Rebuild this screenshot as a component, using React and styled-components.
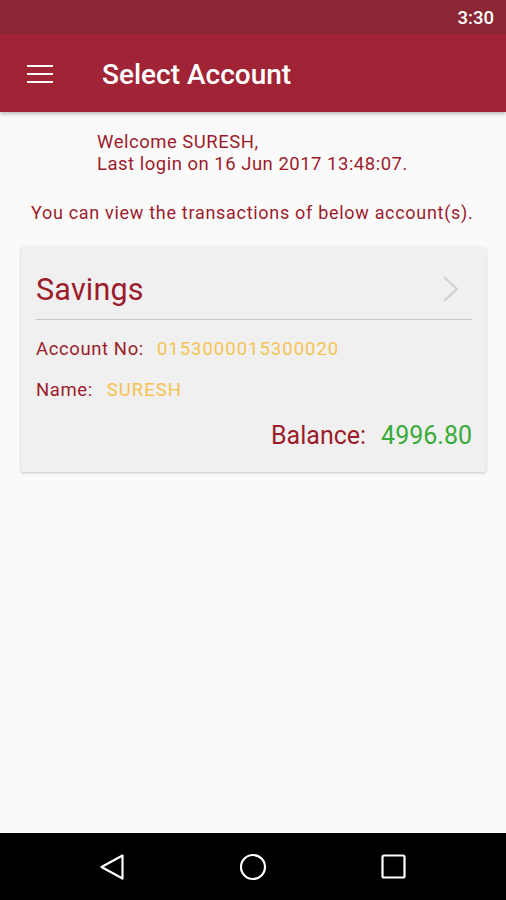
import React from 'react'
import styled, { createGlobalStyle } from "styled-components";

const GlobalStyle = createGlobalStyle`
  html, body {
    margin: 0;
    padding: 0;
    background: #fafafa;
  }
  * { box-sizing: border-box; }
`

const App = () => {
    const accounts = [
        { id: 1, type: "Savings", number: "0153000015300020", name: "SURESH", balance: "4996.80" }
    ]

    return (
        <Screen>
            <GlobalStyle />
            <StatusBar>3:30</StatusBar>
            <AppBar>
                <MenuIcon>
                    <span /><span /><span />
                </MenuIcon>
                <Title>Select Account</Title>
            </AppBar>
            <Content>
                <Welcome>
                    Welcome SURESH,<br />
                    Last login on 16 Jun 2017 13:48:07.
                </Welcome>
                <Notice>You can view the transactions of below account(s).</Notice>
                {
                    accounts.map((acc) => (
                        <Card key={acc.id}>
                            <CardHead>
                                <AccountType>{acc.type}</AccountType>
                                <svg width="18" height="28" viewBox="0 0 18 28">
                                    <path d="M2 2 L15 14 L2 26" fill="none" stroke="#cfcfcf" strokeWidth="2" />
                                </svg>
                            </CardHead>
                            <Fields>
                                <Field $gap="13px">
                                    <Label>Account No:</Label>
                                    <Value>{acc.number}</Value>
                                </Field>
                                <Field $gap="14px">
                                    <Label>Name:</Label>
                                    <Value>{acc.name}</Value>
                                </Field>
                            </Fields>
                            <BalanceRow>
                                <span>Balance:</span>
                                <Amount>{acc.balance}</Amount>
                            </BalanceRow>
                        </Card>
                    ))
                }
            </Content>
            <NavBar>
                <svg width="26" height="28" viewBox="0 0 26 28">
                    <path d="M23.5 2.5 L2.5 14 L23.5 25.5 Z" fill="none" stroke="#fff" strokeWidth="2.2" strokeLinejoin="round" />
                </svg>
                <svg width="28" height="28" viewBox="0 0 28 28">
                    <circle cx="14" cy="14" r="12" fill="none" stroke="#fff" strokeWidth="2.2" />
                </svg>
                <svg width="26" height="26" viewBox="0 0 26 26">
                    <rect x="1.5" y="1.5" width="22" height="22" rx="1.5" fill="none" stroke="#fff" strokeWidth="2.2" />
                </svg>
            </NavBar>
        </Screen>
    )
}

export default App


const Screen = styled.div`
    width: 506px;
    height: 900px;
    display: flex;
    flex-direction: column;
    font-family: Roboto, "Noto Sans", sans-serif;
    background: #fafafa;
`
const StatusBar = styled.div`
    height: 34px;
    background: #8b2634;
    color: #fff;
    font-size: 18.5px;
    font-weight: 500;
    display: flex;
    align-items: center;
    justify-content: flex-end;
    padding: 2px 12px 0 0;
`
const AppBar = styled.div`
    height: 78px;
    background: #a02436;
    display: flex;
    align-items: center;
    padding: 2px 0 0 27px;
    box-shadow: 0 2px 4px rgba(0,0,0,0.25);
    position: relative;
    z-index: 1;
`
const MenuIcon = styled.div`
    width: 26px;
    display: flex;
    flex-direction: column;
    gap: 5.5px;
    margin-right: 49px;
    span{
        height: 2.5px;
        background: #fff;
    }
`
const Title = styled.h1`
    margin: 0;
    color: #fff;
    font-size: 28px;
    font-weight: 500;
`
const Content = styled.div`
    flex: 1;
    padding: 19px 20px 0 21px;
    color: #9c1c2c;
`
const Welcome = styled.p`
    margin: 0 0 0 76px;
    font-size: 18.5px;
    letter-spacing: 0.5px;
    line-height: 22px;
`
const Notice = styled.p`
    margin: 27px 0 0 10px;
    font-size: 18px;
    letter-spacing: 0.7px;
    line-height: 22px;
    white-space: nowrap;
`
const Card = styled.div`
    margin-top: 23px;
    height: 225px;
    background: #f0f0f0;
    border-radius: 2px;
    box-shadow: 0 1px 3px rgba(0,0,0,0.22);
    padding: 0 14px 0 15px;
`
const CardHead = styled.div`
    height: 73px;
    display: flex;
    align-items: center;
    justify-content: space-between;
    border-bottom: 1px solid #c6c6c6;
    padding: 12px 12px 0 0;
`
const AccountType = styled.span`
    font-size: 30.5px;
    letter-spacing: 0.2px;
    color: #9c1c2c;
`
const Fields = styled.div`
    padding-top: 8px;
`
const Field = styled.div`
    display: flex;
    gap: ${(props) => props.$gap};
    font-size: 18.5px;
    letter-spacing: 0.6px;
    height: 41px;
    align-items: center;
`
const Label = styled.span`
    color: #9c1c2c;
`
const Value = styled.span`
    color: #f6c350;
    letter-spacing: 1px;
`
const BalanceRow = styled.div`
    display: flex;
    justify-content: flex-end;
    align-items: center;
    gap: 15px;
    height: 30px;
    font-size: 25px;
    color: #9c1c2c;
    margin-top: 10px;
`
const Amount = styled.span`
    color: #3aab3a;
`
const NavBar = styled.div`
    height: 67px;
    background: #000;
    display: flex;
    align-items: center;
    justify-content: center;
    gap: 114px;
`
